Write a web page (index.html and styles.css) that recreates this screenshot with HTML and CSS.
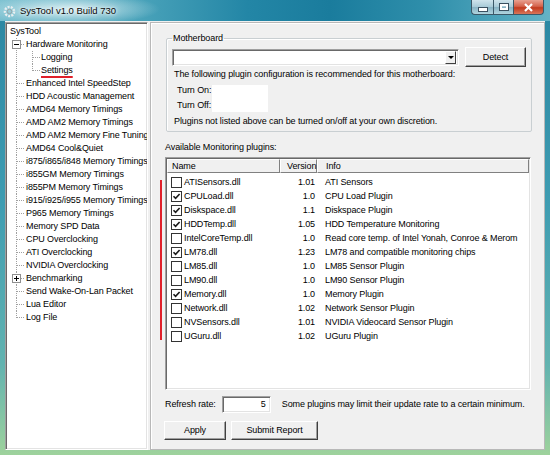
FILE: index.html
```html
<!DOCTYPE html>
<html>
<head>
<meta charset="utf-8">
<link rel="stylesheet" href="styles.css">
</head>
<body>
<div class="window">
  <div class="titlebar">
    <svg class="app-icon" width="13" height="13" viewBox="0 0 13 13">
      <circle cx="6.5" cy="6.5" r="4.6" fill="none" stroke="#e8eef0" stroke-width="2.4" stroke-dasharray="2 1.2"/>
      <circle cx="6.5" cy="6.5" r="2.2" fill="none" stroke="#9aa4a8" stroke-width="1"/>
    </svg>
    <span class="title">SysTool v1.0 Build 730</span>
    <div class="caption-btns">
      <span class="cbtn min"><span class="g-min"></span></span>
      <span class="cbtn max"><span class="g-max"></span></span>
      <span class="cbtn close">
        <svg width="11" height="9" viewBox="0 0 11 9"><path d="M2 1 L9 8 M9 1 L2 8" stroke="#fff" stroke-width="2.2"/></svg>
      </span>
    </div>
  </div>
  <div class="client">
    <div class="tree">
      <div class="root">SysTool</div>
      <ul class="lvl1">
        <li><span class="exp minus"></span>Hardware Monitoring
          <ul class="lvl2">
            <li>Logging</li>
            <li><span class="mark">Settings</span></li>
          </ul>
        </li>
        <li>Enhanced Intel SpeedStep</li>
        <li>HDD Acoustic Management</li>
        <li>AMD64 Memory Timings</li>
        <li>AMD AM2 Memory Timings</li>
        <li>AMD AM2 Memory Fine Tuning</li>
        <li>AMD64 Cool&amp;Quiet</li>
        <li>i875/i865/i848 Memory Timings</li>
        <li>i855GM Memory Timings</li>
        <li>i855PM Memory Timings</li>
        <li>i915/i925/i955 Memory Timings</li>
        <li>P965 Memory Timings</li>
        <li>Memory SPD Data</li>
        <li>CPU Overclocking</li>
        <li>ATI Overclocking</li>
        <li>NVIDIA Overclocking</li>
        <li><span class="exp plus"></span>Benchmarking</li>
        <li>Send Wake-On-Lan Packet</li>
        <li>Lua Editor</li>
        <li>Log File</li>
      </ul>
    </div>
    <div class="panel">
      <fieldset class="group">
        <legend>Motherboard</legend>
        <div class="mb-row">
          <div class="combo"><span class="combo-btn"><span class="arrow"></span></span></div>
          <button class="btn detect">Detect</button>
        </div>
        <div class="line">The following plugin configuration is recommended for this motherboard:</div>
        <div class="turn">
          <span class="turn-lbl">Turn On:</span>
          <span class="turn-box"></span>
          <span class="turn-lbl">Turn Off:</span>
        </div>
        <div class="line last">Plugins not listed above can be turned on/off at your own discretion.</div>
      </fieldset>

      <div class="avail">Available Monitoring plugins:</div>
      <div class="list">
        <span class="annot-line"></span>
        <div class="list-head">
          <span class="hcell c-name">Name</span>
          <span class="hcell c-ver">Version</span>
          <span class="hcell c-info">Info</span>
        </div>
        <div class="rows">
          <div class="row"><span class="c-name"><span class="cb"></span>ATISensors.dll</span><span class="c-ver">1.01</span><span class="c-info">ATI Sensors</span></div>
          <div class="row"><span class="c-name"><span class="cb on"><svg width="9" height="9" viewBox="0 0 9 9"><path d="M1.5 4.2 L3.6 6.4 L7.6 2" fill="none" stroke="#1a1a1a" stroke-width="1.6"/></svg></span>CPULoad.dll</span><span class="c-ver">1.0</span><span class="c-info">CPU Load Plugin</span></div>
          <div class="row"><span class="c-name"><span class="cb on"><svg width="9" height="9" viewBox="0 0 9 9"><path d="M1.5 4.2 L3.6 6.4 L7.6 2" fill="none" stroke="#1a1a1a" stroke-width="1.6"/></svg></span>Diskspace.dll</span><span class="c-ver">1.1</span><span class="c-info">Diskspace Plugin</span></div>
          <div class="row"><span class="c-name"><span class="cb on"><svg width="9" height="9" viewBox="0 0 9 9"><path d="M1.5 4.2 L3.6 6.4 L7.6 2" fill="none" stroke="#1a1a1a" stroke-width="1.6"/></svg></span>HDDTemp.dll</span><span class="c-ver">1.05</span><span class="c-info">HDD Temperature Monitoring</span></div>
          <div class="row"><span class="c-name"><span class="cb"></span>IntelCoreTemp.dll</span><span class="c-ver">1.0</span><span class="c-info">Read core temp. of Intel Yonah, Conroe &amp; Merom</span></div>
          <div class="row"><span class="c-name"><span class="cb on"><svg width="9" height="9" viewBox="0 0 9 9"><path d="M1.5 4.2 L3.6 6.4 L7.6 2" fill="none" stroke="#1a1a1a" stroke-width="1.6"/></svg></span>LM78.dll</span><span class="c-ver">1.23</span><span class="c-info">LM78 and compatible monitoring chips</span></div>
          <div class="row"><span class="c-name"><span class="cb"></span>LM85.dll</span><span class="c-ver">1.0</span><span class="c-info">LM85 Sensor Plugin</span></div>
          <div class="row"><span class="c-name"><span class="cb"></span>LM90.dll</span><span class="c-ver">1.0</span><span class="c-info">LM90 Sensor Plugin</span></div>
          <div class="row"><span class="c-name"><span class="cb on"><svg width="9" height="9" viewBox="0 0 9 9"><path d="M1.5 4.2 L3.6 6.4 L7.6 2" fill="none" stroke="#1a1a1a" stroke-width="1.6"/></svg></span>Memory.dll</span><span class="c-ver">1.0</span><span class="c-info">Memory Plugin</span></div>
          <div class="row"><span class="c-name"><span class="cb"></span>Network.dll</span><span class="c-ver">1.02</span><span class="c-info">Network Sensor Plugin</span></div>
          <div class="row"><span class="c-name"><span class="cb"></span>NVSensors.dll</span><span class="c-ver">1.01</span><span class="c-info">NVIDIA Videocard Sensor Plugin</span></div>
          <div class="row"><span class="c-name"><span class="cb"></span>UGuru.dll</span><span class="c-ver">1.02</span><span class="c-info">UGuru Plugin</span></div>
        </div>
      </div>

      <div class="refresh">
        <span>Refresh rate:</span>
        <span class="num-input">5</span>
        <span class="note">Some plugins may limit their update rate to a certain minimum.</span>
      </div>
      <div class="actions">
        <button class="btn apply">Apply</button>
        <button class="btn submit">Submit Report</button>
      </div>
    </div>
  </div>
</div>
</body>
</html>
```

FILE: styles.css
```css
html, body {
  margin: 0;
  padding: 0;
}
body {
  width: 550px;
  height: 455px;
  overflow: hidden;
  font-family: "Liberation Sans", Arial, sans-serif;
  font-size: 9px;
  letter-spacing: -0.1px;
  color: #000;
}
.window {
  width: 550px;
  height: 455px;
  box-sizing: border-box;
  display: flex;
  flex-direction: column;
  background: linear-gradient(to bottom, #2a86a2 0%, #3f9db2 45%, #62b3b0 80%, #9ed29c 100%);
}

/* title bar */
.titlebar {
  height: 21px;
  flex: none;
  display: flex;
  align-items: center;
  position: relative;
  background:
    radial-gradient(ellipse 90px 16px at 70px 9px, rgba(235,248,250,0.85), rgba(235,248,250,0) 100%),
    linear-gradient(to right, #79bfcf 0%, #4aa3ba 25%, #2386a6 45%, #1a7c9d 60%, #2f8fab 78%, #64b3c6 100%);
}
.app-icon {
  margin-left: 3px;
  margin-top: 1px;
  flex: none;
}
.title {
  margin-left: 4px;
  font-size: 9.5px;
  letter-spacing: 0;
  color: #0a0a0a;
  text-shadow: 0 0 6px #fff, 0 0 3px #fff;
}
.caption-btns {
  position: absolute;
  right: 6px;
  top: 0;
  display: flex;
  height: 16px;
}
.cbtn {
  height: 15px;
  box-sizing: border-box;
  border: 1px solid #3b5868;
  border-top: none;
  display: flex;
  align-items: center;
  justify-content: center;
}
.cbtn.min, .cbtn.max {
  width: 22px;
  background: linear-gradient(to bottom, #cfe4ec 0%, #a9cbd8 48%, #88b3c4 52%, #b0d4de 100%);
}
.cbtn.min {
  border-radius: 0 0 0 4px;
  border-right: none;
}
.cbtn.max {
  width: 21px;
}
.cbtn.close {
  width: 30px;
  border-left: none;
  border-radius: 0 0 4px 0;
  background: linear-gradient(to bottom, #e8a090 0%, #d4634c 45%, #c23a1e 55%, #d8765a 100%);
}
.g-min {
  width: 8px;
  height: 3px;
  background: #fff;
  border: 1px solid #3a5060;
  margin-top: 5px;
}
.g-max {
  width: 8px;
  height: 6px;
  border: 2px solid #fff;
  outline: 1px solid #3a5060;
  box-sizing: border-box;
}

/* client */
.client {
  flex: 1;
  display: flex;
  gap: 2px;
  margin: 0 5px 5px 5px;
  padding-top: 1px;
  background: #f0f0f0;
  min-height: 0;
}

/* tree */
.tree {
  width: 143px;
  flex: none;
  box-sizing: border-box;
  background: #fff;
  border-top: 1px solid #a0a0a0;
  border-left: 1px solid #a0a0a0;
  border-right: 1px solid #fff;
  border-bottom: 1px solid #fff;
  box-shadow: inset 1px 1px 0 #696969, inset -1px -1px 0 #e3e3e3;
  padding: 2px 0 0 2px;
  line-height: 13px;
  white-space: nowrap;
  overflow: hidden;
}
.root {
  height: 13px;
  padding-left: 2px;
}
.tree ul {
  list-style: none;
  margin: 0;
  padding: 0;
}
.tree ul.lvl1 {
  margin-left: 8px;
}
.tree ul.lvl2 {
  margin-left: 6px;
}
.tree li {
  position: relative;
  padding-left: 10px;
}
.tree li::before {
  content: "";
  position: absolute;
  left: 1px;
  top: 6px;
  width: 7px;
  border-top: 1px dotted #a0a0a0;
}
.tree li::after {
  content: "";
  position: absolute;
  left: 0;
  top: 0;
  height: 100%;
  border-left: 1px dotted #a0a0a0;
}
.tree li:last-child::after {
  height: 7px;
}
.tree .lvl2 li {
  padding-left: 9px;
}
.exp {
  position: absolute;
  left: -4px;
  top: 2px;
  width: 9px;
  height: 9px;
  box-sizing: border-box;
  border: 1px solid #8f8f8f;
  background: #fff;
  z-index: 1;
}
.exp::before {
  content: "";
  position: absolute;
  left: 1px;
  top: 3px;
  width: 5px;
  height: 1px;
  background: #000;
}
.exp.plus::after {
  content: "";
  position: absolute;
  left: 3px;
  top: 1px;
  width: 1px;
  height: 5px;
  background: #000;
}
.mark {
  text-decoration: underline;
  text-decoration-color: #e0202a;
  text-decoration-thickness: 2px;
  text-underline-offset: 3px;
}

/* right panel */
.panel {
  flex: 1;
  box-sizing: border-box;
  border: 1px solid #b8b8b8;
  box-shadow: inset 1px 1px 0 #fff;
  padding: 10px 0 0 14px;
  display: flex;
  flex-direction: column;
  align-items: flex-start;
  line-height: 11px;
  white-space: nowrap;
}
.group {
  margin: 0 0 0 1px;
  width: 366px;
  box-sizing: border-box;
  border: 1px solid #c9cfd2;
  border-radius: 2px;
  box-shadow: inset 1px 1px 0 #fff;
  padding: 0 5px 4px 5px;
  min-inline-size: 0;
}
.group legend {
  padding: 0 1px;
  margin-left: 0;
  line-height: 11px;
}
.mb-row {
  display: flex;
  align-items: center;
  gap: 6px;
  margin-top: 3px;
}
.combo {
  width: 287px;
  height: 17px;
  box-sizing: border-box;
  background: #fff;
  border-top: 1px solid #a0a0a0;
  border-left: 1px solid #a0a0a0;
  border-right: 1px solid #fff;
  border-bottom: 1px solid #fff;
  box-shadow: inset 1px 1px 0 #696969, inset -1px -1px 0 #e3e3e3;
  display: flex;
  justify-content: flex-end;
  align-items: center;
  padding-right: 2px;
}
.combo-btn {
  width: 11px;
  height: 13px;
  box-sizing: border-box;
  background: #f0f0f0;
  border-top: 1px solid #fff;
  border-left: 1px solid #fff;
  border-right: 1px solid #404040;
  border-bottom: 1px solid #404040;
  display: flex;
  align-items: center;
  justify-content: center;
}
.arrow {
  width: 0;
  height: 0;
  border-left: 3px solid transparent;
  border-right: 3px solid transparent;
  border-top: 3px solid #000;
}
.btn {
  font-family: inherit;
  font-size: 9px;
  letter-spacing: inherit;
  color: #000;
  background: #f0f0f0;
  box-sizing: border-box;
  border-top: 1px solid #fff;
  border-left: 1px solid #fff;
  border-right: 1px solid #404040;
  border-bottom: 1px solid #404040;
  box-shadow: inset -1px -1px 0 #a0a0a0;
  padding: 0;
  margin: 0;
  line-height: 11px;
}
.detect {
  width: 61px;
  height: 20px;
}
.line {
  margin-top: 2px;
  padding-left: 2px;
}
.turn {
  display: grid;
  grid-template-columns: 35px 56px;
  grid-template-rows: 15px 15px;
  margin-top: 3px;
  padding-left: 5px;
  align-items: center;
}
.turn-box {
  grid-column: 2;
  grid-row: 1 / span 2;
  background: #fff;
  height: 27px;
}
.turn-lbl:last-child {
  grid-column: 1;
  grid-row: 2;
}
.line.last {
  margin-top: 3px;
}

.avail {
  margin-top: 10px;
}
.list {
  position: relative;
  margin-top: 4px;
  width: 366px;
  height: 233px;
  box-sizing: border-box;
  background: #fff;
  border-top: 1px solid #a0a0a0;
  border-left: 1px solid #a0a0a0;
  border-right: 1px solid #fff;
  border-bottom: 1px solid #fff;
  box-shadow: inset 1px 1px 0 #696969, inset -1px -1px 0 #e3e3e3;
  padding: 1px 1px 1px 1px;
}
.annot-line {
  position: absolute;
  left: -6px;
  top: 22px;
  width: 2px;
  height: 160px;
  background: #e0202a;
}
.list-head {
  display: flex;
  height: 14px;
  background: #f0f0f0;
}
.hcell {
  box-sizing: border-box;
  border-top: 1px solid #fff;
  border-left: 1px solid #fff;
  border-right: 1px solid #808080;
  border-bottom: 1px solid #808080;
  display: flex;
  align-items: center;
  padding-left: 4px;
}
.list-head .c-name { width: 113px; }
.list-head .c-ver { width: 37px; padding-left: 6px; }
.list-head .c-info { flex: 1; padding-left: 8px; }
.rows {
  padding-top: 2px;
}
.row {
  display: flex;
  height: 14px;
  align-items: center;
}
.row .c-name {
  width: 113px;
  display: flex;
  align-items: center;
  padding-left: 4px;
  box-sizing: border-box;
}
.row .c-ver {
  width: 37px;
  text-align: right;
  padding-right: 2px;
  box-sizing: border-box;
}
.row .c-info {
  padding-left: 8px;
}
.cb {
  width: 11px;
  height: 11px;
  box-sizing: border-box;
  border: 1px solid #333;
  background: #fff;
  margin-right: 2px;
  display: flex;
  align-items: center;
  justify-content: center;
  flex: none;
}

.refresh {
  display: flex;
  align-items: center;
  margin-top: 6px;
}
.num-input {
  width: 49px;
  height: 17px;
  margin-left: 6px;
  box-sizing: border-box;
  background: #fff;
  border-top: 1px solid #a0a0a0;
  border-left: 1px solid #a0a0a0;
  border-right: 1px solid #fff;
  border-bottom: 1px solid #fff;
  box-shadow: inset 1px 1px 0 #696969, inset -1px -1px 0 #e3e3e3;
  text-align: right;
  padding-right: 4px;
  line-height: 15px;
}
.note {
  margin-left: 11px;
}
.actions {
  display: flex;
  gap: 5px;
  margin-top: 8px;
  margin-left: -1px;
}
.apply {
  width: 62px;
  height: 19px;
}
.submit {
  width: 87px;
  height: 19px;
}
```
